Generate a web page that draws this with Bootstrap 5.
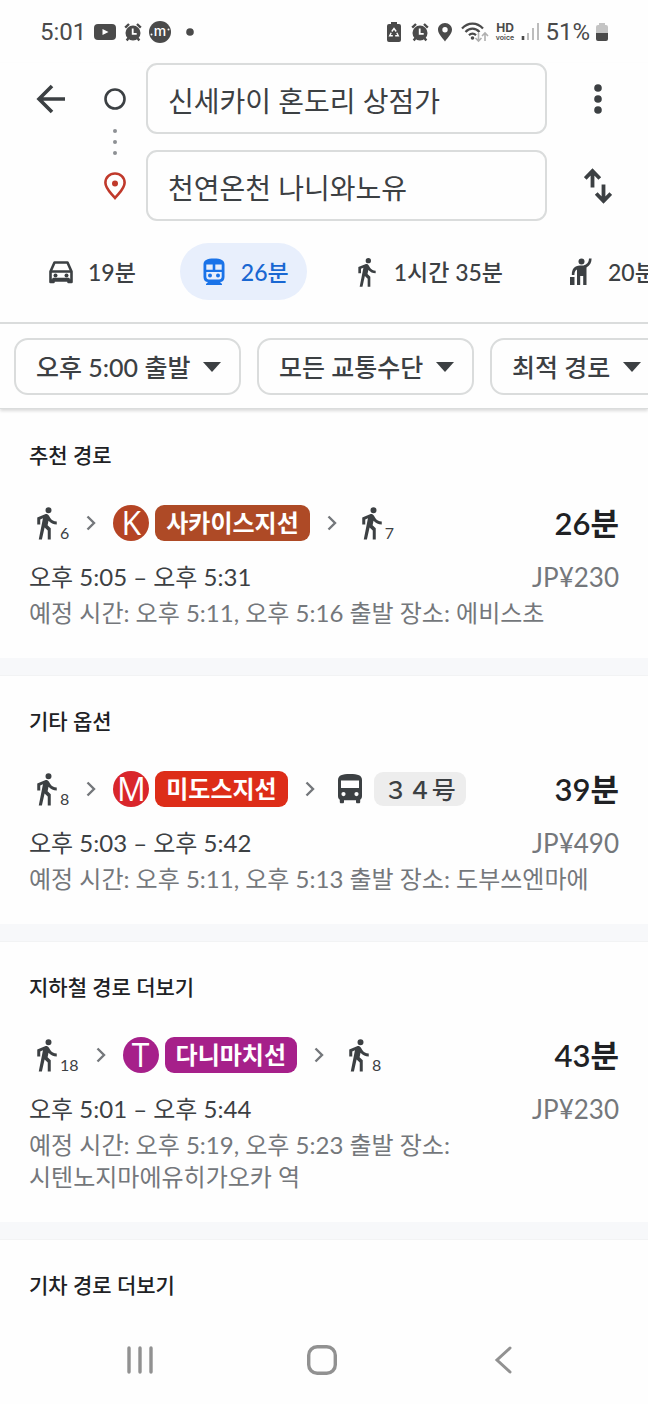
<!DOCTYPE html>
<html lang="ko">
<head>
<meta charset="utf-8">
<meta name="viewport" content="width=device-width, initial-scale=1">
<title>대중교통 경로</title>
<link href="https://cdn.jsdelivr.net/npm/bootstrap@5.3.0/dist/css/bootstrap.min.css" rel="stylesheet">
<style>
  :root { --ink: #3c4043; --strong: #202124; --muted: #74777b; --line: #dadcdc; --blue: #1967d2; }
  body { font-family: Lato, "Noto Sans CJK KR", sans-serif; color: var(--ink); background: #fefefe; overflow-x: hidden; }
  svg { display: block; flex: none; }

  /* status bar */
  .statusbar { height: 63px; padding: 0 40px; font: 400 24px/30px Roboto, sans-serif; color: #4a4a4a; }
  .status-left { gap: 7px; }
  .status-right { gap: 6px; }

  /* trip header */
  .trip-head { z-index: 2; background: #fefefe; border-bottom: 1px solid var(--line); box-shadow: 0 2px 3px rgba(0,0,0,.14); }
  .icon-btn { border: 0; background: none; padding: 0; color: var(--ink); display: flex; justify-content: center; align-items: center; }
  .back-col { width: 73px; padding-left: 28px; height: 71px; }
  .stops-col { width: 73px; padding-left: 11px; }
  .side-col { width: 101px; }
  .stop-mark { height: 71px; }
  .stop-dots { margin: -6px 0; }
  .place-input { height: 71px; border: 2px solid var(--line); border-radius: 11px; padding: 2px 20px 0; font-size: 28px; color: var(--ink); background: #fefefe; }

  .mode-tabs { margin-top: 22px; padding-left: 27px; gap: 26px; overflow: hidden; }
  .mode-tab { border: 0; background: none; height: 57px; padding: 0 18px; gap: 11px; border-radius: 29px; font-size: 23px; font-weight: 500; line-height: 32px; color: var(--ink); white-space: nowrap; }
  .mode-tab[aria-selected="true"] { background: #e8effc; color: var(--blue); }

  .filters { margin-top: 22px; border-top: 2px solid var(--line); padding: 14px 0 13px 14px; gap: 16px; overflow: hidden; }
  .filter-select { width: auto; height: 57px; flex: none; border: 2px solid var(--line); border-radius: 14px; padding: 0 48px 0 20px; font-size: 25px; font-weight: 500; line-height: 36px; color: var(--ink); background-color: #fefefe;
    background-image: url("data:image/svg+xml,%3Csvg xmlns='http://www.w3.org/2000/svg' viewBox='0 0 18 10'%3E%3Cpath fill='%233c4043' d='M0 0h18L9 10z'/%3E%3C/svg%3E"); background-size: 18px 10px; background-position: right 18px center; }

  /* route list */
  .route { padding: 30px 29px 29px; }
  .route + .route { border-top: 17px solid #f7f8fa; box-shadow: inset 0 1px #f2f3f4; }
  .route h2 { font-size: 21px; line-height: 32px; font-weight: 500; color: var(--strong); margin-bottom: 32px; }
  .legs { height: 40px; gap: 17px; }
  .walk { padding-left: 8px; gap: 3px; font-size: 16px; line-height: 20px; }
  .walk span { padding-top: 20px; }
  .ride { gap: 6px; }
  .ride-bus { gap: 12px; padding-left: 6px; }
  .line-mark { width: 36px; height: 36px; border-radius: 50%; color: #fff; font: 400 32px/36px "Open Sans", sans-serif; text-align: center; }
  .line-name { height: 36px; border-radius: 9px; padding: 0 11px; color: #fff; font-size: 24px; line-height: 35px; font-weight: 700; }
  .line-k { background: #ae4a26; } .mark-k { background: #b54424; }
  .line-m { background: #dd2d18; } .mark-m { background: #d9262b; }
  .line-t { background: #a6208a; }
  .bus-name { height: 34px; border-radius: 9px; padding: 0 10px; background: #ededed; font: 500 24px/33px "Noto Sans CJK JP", sans-serif; }
  .total { font-size: 31px; line-height: 40px; font-weight: 600; color: var(--strong); }
  .when { margin-top: 16px; font-size: 24px; line-height: 36px; }
  .detail { font-size: 24px; line-height: 32px; color: var(--muted); margin: 2px 0 0; word-break: keep-all; }
  .fare { color: var(--muted); font-size: 26px; }

  .sysnav { height: 88px; background: #fefefe; padding: 0 54px 0 49px; }
  .sysnav .icon-btn { flex: 1 1 0; color: #919191; }
</style>
</head>
<body>
<svg width="0" height="0" class="position-absolute" aria-hidden="true">
  <symbol id="walker" viewBox="6 0 13 24"><path fill="currentColor" d="M13.500 5.500a2 2 0 1 0 0-4 2 2 0 0 0 0 4zM9.800 8.900 7 23h2.100l1.800-8 2.100 2v6h2v-7.500l-2.100-2 .6-3C14.800 12 16.800 13 19 13v-2c-1.900 0-3.500-1-4.300-2.400l-1-1.600c-.4-.6-1-1-1.700-1-.3 0-.5.1-.8.1L6 8.300V13h2V9.600z"/></symbol>
  <symbol id="chevron" viewBox="0 0 10 16"><path d="M1.500 1.500 8 8l-6.500 6.500" fill="none" stroke="#74777b" stroke-width="2.400"/></symbol>
  <symbol id="alarm" viewBox="0 0 18 20"><path d="M1.200 5.600 5 2M16.800 5.600 13 2M4.500 16l-1.800 2.500M13.500 16l1.800 2.500" stroke="currentColor" stroke-width="2.400" fill="none"/><circle cx="9" cy="11" r="7.500" fill="currentColor"/><path d="M8.700 6.500v5.300h4" stroke="#fff" stroke-width="1.800" fill="none"/></symbol>
</svg>

<div class="d-flex flex-column min-vh-100">
  <div class="statusbar d-flex justify-content-between align-items-center">
    <div class="status-left d-flex align-items-center">
      <span>5:01</span>
      <svg width="24" height="18" viewBox="0 0 24 18"><rect x="1" y="1" width="22" height="16" rx="4" fill="currentColor"/><path d="M9.500 6v6l6-3z" fill="#fff"/></svg>
      <svg width="18" height="20"><use href="#alarm"/></svg>
      <svg width="22" height="22" viewBox="0 0 22 22"><circle cx="11" cy="11" r="11" fill="currentColor"/><text x="11" y="15" text-anchor="middle" font-family="Inter, sans-serif" font-size="14" font-weight="500" fill="#fff">m</text><circle cx="2.500" cy="13.500" r="1" fill="#fff"/><circle cx="19.500" cy="8.500" r="1" fill="#fff"/></svg>
      <svg class="ms-2" width="8" height="8" viewBox="0 0 8 8"><circle cx="4" cy="4" r="3.800" fill="currentColor"/></svg>
    </div>
    <div class="status-right d-flex align-items-center">
      <svg width="14" height="20" viewBox="0 0 14 20"><path d="M4 0h6v2h2a2 2 0 0 1 2 2v14a2 2 0 0 1-2 2H2a2 2 0 0 1-2-2V4a2 2 0 0 1 2-2h2z" fill="currentColor"/><path d="m4.800 9.500 2.200-3 2.200 3M9.800 10.800l1.500 3H8.200M5.800 13.800H2.700l1.500-3" fill="none" stroke="#fff" stroke-width="1.400"/></svg>
      <svg class="ms-1" width="18" height="20"><use href="#alarm"/></svg>
      <svg width="20" height="20" viewBox="-3 0 20 20"><path fill-rule="evenodd" d="M7 1C3 1 0 4 0 7.600 0 12 4.500 16 7 19.500 9.500 16 14 12 14 7.600 14 4 11 1 7 1zm0 4a2.700 2.700 0 1 1 0 5.400A2.700 2.700 0 0 1 7 5z" fill="currentColor"/></svg>
      <svg width="28" height="22" viewBox="0 0 28 22"><g fill="none" stroke="currentColor" stroke-width="2.200"><path d="M1 7.500c6-6.500 15-6.500 21 0M4.500 11c4-4.500 10-4.500 14 0M8 14.200c2-2.200 5-2.200 7 0"/></g><circle cx="11.500" cy="17" r="1.800" fill="currentColor"/><path d="M17.500 12v8m-3-3 3 3 3-3M24 20v-8m-3 3 3-3 3 3" fill="none" stroke="#b0b0b0" stroke-width="1.600"/></svg>
      <svg width="20" height="26" viewBox="0 0 20 26"><g fill="currentColor" font-family="Inter, sans-serif" text-anchor="middle"><text x="10" y="13" font-size="12" font-weight="700">HD</text><text x="10" y="21" font-size="7" font-weight="600">voice</text></g></svg>
      <svg width="18" height="20" viewBox="0 0 18 20"><path d="M2 14v4" stroke="currentColor" stroke-width="2.600"/><path d="M7 11v7M12 6v12M17 1v17" stroke="#bcbcbc" stroke-width="2"/></svg>
      <span>51%</span>
      <svg width="12" height="20" viewBox="0 0 12 20"><path d="M3 1h6v2h1a2 2 0 0 1 2 2v6H0V5a2 2 0 0 1 2-2h1z" fill="#c4c4c4"/><path d="M0 11h12v6a2 2 0 0 1-2 2H2a2 2 0 0 1-2-2z" fill="currentColor"/></svg>
    </div>
  </div>

  <header class="trip-head position-relative">
    <div class="d-flex">
      <div class="back-col d-flex align-items-center">
        <button class="icon-btn w-100" type="button" aria-label="뒤로"><svg width="30" height="30" viewBox="0 0 30 30"><path d="M29 15H3M16 2 3 15l13 13" fill="none" stroke="currentColor" stroke-width="3.600"/></svg></button>
      </div>
      <div class="stops-col d-flex flex-column align-items-center">
        <div class="stop-mark d-flex align-items-center"><svg width="22" height="22" viewBox="0 0 22 22"><circle cx="11" cy="11" r="9.500" fill="none" stroke="currentColor" stroke-width="2.600"/></svg></div>
        <svg class="stop-dots" width="4" height="28" viewBox="0 0 4 28"><g fill="#8d9094"><circle cx="2" cy="3" r="2"/><circle cx="2" cy="14" r="2"/><circle cx="2" cy="25" r="2"/></g></svg>
        <div class="stop-mark d-flex align-items-center"><svg width="22" height="28" viewBox="0 0 22 28"><path d="M11 1.500c-5.400 0-9.600 4-9.600 9.300C1.400 16.500 6 20 11 26c5-6 9.600-9.500 9.600-15.200 0-5.300-4.200-9.300-9.600-9.300z" fill="none" stroke="#c0392b" stroke-width="2.600"/><circle cx="11" cy="11.500" r="3" fill="#c0392b"/></svg></div>
      </div>
      <div class="flex-grow-1 d-flex flex-column gap-3">
        <input class="place-input w-100" type="text" aria-label="출발지" value="신세카이 혼도리 상점가">
        <input class="place-input w-100" type="text" aria-label="도착지" value="천연온천 나니와노유">
      </div>
      <div class="side-col d-flex flex-column gap-3">
        <button class="icon-btn stop-mark" type="button" aria-label="메뉴"><svg width="8" height="30" viewBox="0 0 8 30"><g fill="currentColor"><circle cx="4" cy="4" r="3.800"/><circle cx="4" cy="15" r="3.800"/><circle cx="4" cy="26" r="3.800"/></g></svg></button>
        <button class="icon-btn stop-mark" type="button" aria-label="출발지와 도착지 바꾸기"><svg width="28" height="36" viewBox="0 0 28 36"><path d="M8.500 19.500V3M1.200 10.500l7.300-7.600 7.300 7.600M19.500 16.500V33M12.200 25.500l7.300 7.600 7.300-7.600" fill="none" stroke="currentColor" stroke-width="3.800"/></svg></button>
      </div>
    </div>

    <div class="mode-tabs d-flex" role="tablist" aria-label="이동 수단">
      <button class="mode-tab d-flex align-items-center flex-shrink-0" role="tab" aria-selected="false" type="button">
        <svg width="32" height="32" viewBox="0 0 32 32"><path d="M9.500 6.500h13l4 9V26h-3v-3h-15v3h-3V15.500z" fill="none" stroke="currentColor" stroke-width="2.600" stroke-linejoin="round"/><path d="M5.500 15.500h21M6 24.500h20" stroke="currentColor" stroke-width="2.400"/><circle cx="10.500" cy="19.500" r="2" fill="currentColor"/><circle cx="21.500" cy="19.500" r="2" fill="currentColor"/></svg>
        <span>19분</span></button>
      <button class="mode-tab d-flex align-items-center flex-shrink-0" role="tab" aria-selected="true" type="button">
        <svg width="32" height="32" viewBox="0 0 32 32"><path fill="#1a73e8" fill-rule="evenodd" d="M16 2.500c-7 0-10.500 1.700-10.500 6V21c0 3 1.700 5 4.500 5l-2 2v1h16v-1l-2-2c2.800 0 4.500-2 4.500-5V8.500c0-4.300-3.500-6-10.500-6zM8.300 8.500h6.400v5.200H8.300zM17.300 8.500h6.400v5.200h-6.400zM8.300 16h15.400v4.500c0 2-1 2.900-2.700 2.900H11c-1.700 0-2.700-.9-2.700-2.900z"/><circle cx="12" cy="19.500" r="2" fill="#1a73e8"/><circle cx="20" cy="19.500" r="2" fill="#1a73e8"/></svg>
        <span>26분</span></button>
      <button class="mode-tab d-flex align-items-center flex-shrink-0" role="tab" aria-selected="false" type="button">
        <svg width="32" height="32"><use href="#walker"/></svg>
        <span>1시간 35분</span></button>
      <button class="mode-tab d-flex align-items-center flex-shrink-0" role="tab" aria-selected="false" type="button">
        <svg width="32" height="32" viewBox="0 0 32 32"><g fill="currentColor"><circle cx="16.500" cy="5.500" r="3"/><path d="M5 21h4.500v8H5z"/><path d="M24 2.500h2.600c0 4-1.600 7-5.100 8.900V29h-3.300v-9h-3v9H12V13.500c-1.700.8-2.600 2.400-2.600 5.500H6.800c0-6 2.700-9.500 8.200-9.500h3.500c3.500-1 5.500-3.500 5.500-7z"/></g></svg>
        <span>20분</span></button>
    </div>

    <div class="filters d-flex">
      <select class="form-select filter-select" aria-label="출발 시간"><option>오후 5:00 출발</option></select>
      <select class="form-select filter-select" aria-label="교통수단"><option>모든 교통수단</option></select>
      <select class="form-select filter-select" aria-label="경로 기준"><option>최적 경로</option></select>
    </div>
  </header>

  <main>
    <section class="route">
      <h2>추천 경로</h2>
      <div class="legs d-flex align-items-center">
        <span class="walk d-flex align-items-center"><svg width="20" height="36"><use href="#walker"/></svg><span>6</span></span>
        <svg width="10" height="16"><use href="#chevron"/></svg>
        <span class="ride d-flex"><span class="line-mark mark-k">K</span><span class="line-name line-k">사카이스지선</span></span>
        <svg width="10" height="16"><use href="#chevron"/></svg>
        <span class="walk d-flex align-items-center"><svg width="20" height="36"><use href="#walker"/></svg><span>7</span></span>
        <span class="total ms-auto">26분</span>
      </div>
      <div class="when d-flex justify-content-between"><span>오후 5:05 – 오후 5:31</span><span class="fare">JP¥230</span></div>
      <p class="detail">예정 시간: 오후 5:11, 오후 5:16 출발 장소: 에비스초</p>
    </section>

    <section class="route">
      <h2>기타 옵션</h2>
      <div class="legs d-flex align-items-center">
        <span class="walk d-flex align-items-center"><svg width="20" height="36"><use href="#walker"/></svg><span>8</span></span>
        <svg width="10" height="16"><use href="#chevron"/></svg>
        <span class="ride d-flex"><span class="line-mark mark-m">M</span><span class="line-name line-m">미도스지선</span></span>
        <svg width="10" height="16"><use href="#chevron"/></svg>
        <span class="ride-bus d-flex align-items-center"><svg width="24" height="30" viewBox="0 0 24 30"><path fill="currentColor" fill-rule="evenodd" d="M12 0C4 0 0 1.500 0 6v16c0 1.700.6 2.800 1.800 3.800V28c0 .8.500 1.300 1.300 1.300h1.600c.8 0 1.300-.5 1.300-1.300v-1.700h12V28c0 .8.500 1.300 1.300 1.300h1.600c.8 0 1.300-.5 1.300-1.300v-2.200C23.400 24.800 24 23.700 24 22V6c0-4.500-4-6-12-6zM3 6.500h18V14H3zM5.500 18a2.100 2.100 0 1 1 0 4.200 2.100 2.100 0 0 1 0-4.200zM18.500 18a2.100 2.100 0 1 1 0 4.200 2.100 2.100 0 0 1 0-4.200z"/></svg><span class="bus-name" lang="ja">３４号</span></span>
        <span class="total ms-auto">39분</span>
      </div>
      <div class="when d-flex justify-content-between"><span>오후 5:03 – 오후 5:42</span><span class="fare">JP¥490</span></div>
      <p class="detail">예정 시간: 오후 5:11, 오후 5:13 출발 장소: 도부쓰엔마에</p>
    </section>

    <section class="route">
      <h2>지하철 경로 더보기</h2>
      <div class="legs d-flex align-items-center">
        <span class="walk d-flex align-items-center"><svg width="20" height="36"><use href="#walker"/></svg><span>18</span></span>
        <svg width="10" height="16"><use href="#chevron"/></svg>
        <span class="ride d-flex"><span class="line-mark line-t">T</span><span class="line-name line-t">다니마치선</span></span>
        <svg width="10" height="16"><use href="#chevron"/></svg>
        <span class="walk d-flex align-items-center"><svg width="20" height="36"><use href="#walker"/></svg><span>8</span></span>
        <span class="total ms-auto">43분</span>
      </div>
      <div class="when d-flex justify-content-between"><span>오후 5:01 – 오후 5:44</span><span class="fare">JP¥230</span></div>
      <p class="detail">예정 시간: 오후 5:19, 오후 5:23 출발 장소:<br>시텐노지마에유히가오카 역</p>
    </section>

    <section class="route pb-0">
      <h2 class="mb-0">기차 경로 더보기</h2>
    </section>
  </main>

  <nav class="sysnav d-flex mt-auto" aria-label="시스템 탐색">
    <button class="icon-btn" type="button" aria-label="최근 앱"><svg width="28" height="28" viewBox="0 0 28 28"><path d="M3 2v24M14 2v24M25 2v24" stroke="currentColor" stroke-width="3.400" stroke-linecap="round"/></svg></button>
    <button class="icon-btn" type="button" aria-label="홈"><svg width="30" height="30" viewBox="0 0 30 30"><rect x="1.700" y="1.700" width="26.600" height="26.600" rx="8.500" fill="none" stroke="currentColor" stroke-width="3.400"/></svg></button>
    <button class="icon-btn" type="button" aria-label="이전"><svg width="18" height="28" viewBox="0 0 18 28"><path d="M16 2 3 14l13 12" fill="none" stroke="currentColor" stroke-width="3" stroke-linecap="round"/></svg></button>
  </nav>
</div>
<script src="https://cdn.jsdelivr.net/npm/bootstrap@5.3.0/dist/js/bootstrap.bundle.min.js"></script>
</body>
</html>
